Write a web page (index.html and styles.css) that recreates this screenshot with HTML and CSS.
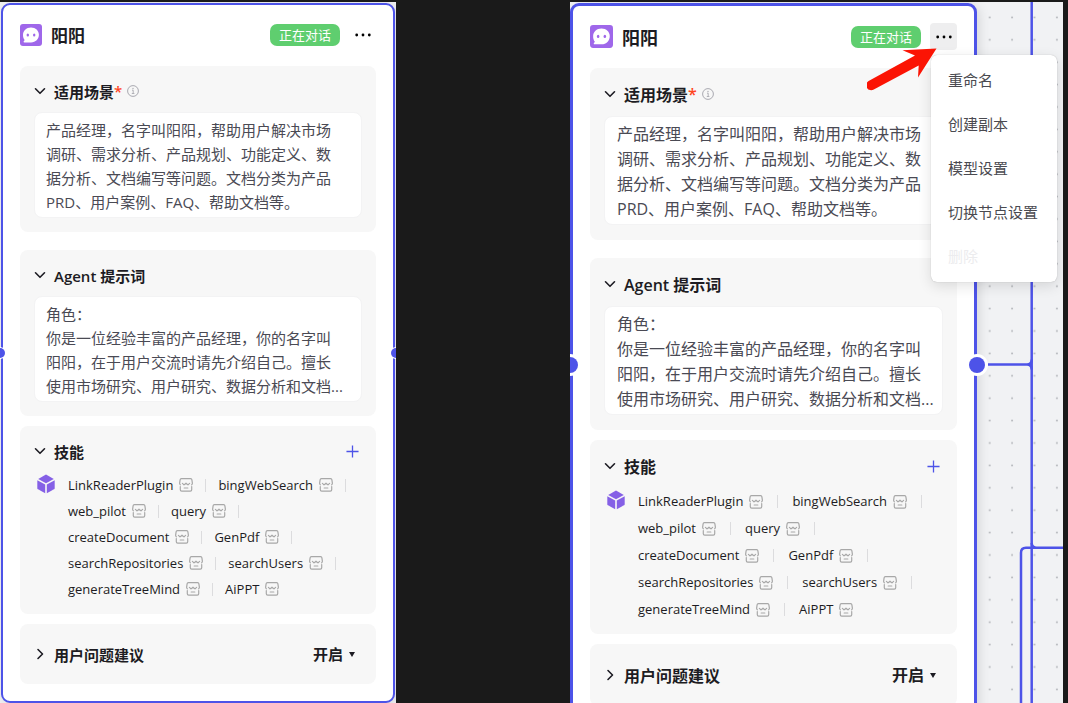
FILE: index.html
```html
<!DOCTYPE html>
<html lang="zh-CN">
<head>
  <meta charset="UTF-8">
  <meta name="viewport" content="width=device-width, initial-scale=1.0">
  <title>阳阳 - Agent</title>
  <link rel="stylesheet" href="styles.css">
</head>
<body>
  <!-- Shared icons -->
  <svg class="sprite" aria-hidden="true">
    <symbol id="i-bot" viewBox="0 0 22 22">
      <rect width="22" height="22" rx="3" fill="#9f67ea"/>
      <path d="M11 3.400c4.600 0 7.900 3.200 7.900 7.300s-3.200 7.700-7.900 7.700H4.300c-.8 0-1-.7-.5-1.200l.9-1.100C3.500 14.700 3 12.900 3 11c0-4.400 3.300-7.600 8-7.600z" fill="#fff"/>
      <ellipse cx="7.800" cy="10.900" rx="1.200" ry="1.500" fill="#9f67ea"/>
      <ellipse cx="14.200" cy="10.900" rx="1.200" ry="1.500" fill="#9f67ea"/>
    </symbol>
    <symbol id="i-dots" viewBox="0 0 16 16">
      <circle cx="1.700" cy="8" r="1.400"/><circle cx="8" cy="8" r="1.400"/><circle cx="14.300" cy="8" r="1.400"/>
    </symbol>
    <symbol id="i-down" viewBox="0 0 12 12">
      <path d="M1.500 3.800L6 8.300l4.500-4.500" fill="none" stroke="currentColor" stroke-width="1.600" stroke-linecap="round" stroke-linejoin="round"/>
    </symbol>
    <symbol id="i-right" viewBox="0 0 12 12">
      <path d="M4 1.500L8.500 6 4 10.500" fill="none" stroke="currentColor" stroke-width="1.600" stroke-linecap="round" stroke-linejoin="round"/>
    </symbol>
    <symbol id="i-info" viewBox="0 0 12 12">
      <circle cx="6" cy="6" r="5.400" fill="none" stroke="#a9a9b0" stroke-width="1"/>
      <path d="M5 5.200h1.200v3.200M4.800 8.500h2.600" fill="none" stroke="#a9a9b0" stroke-width=".9"/>
      <circle cx="6" cy="3.500" r=".7" fill="#a9a9b0"/>
    </symbol>
    <symbol id="i-plus" viewBox="0 0 14 14">
      <path d="M7 .5v13M.5 7h13" stroke="currentColor" stroke-width="1.400" fill="none"/>
    </symbol>
    <symbol id="i-cube" viewBox="0 0 18 20">
      <path d="M9 .6l7.800 4.300L9 9.200 1.200 4.900z"/>
      <path d="M.3 6.200l7.900 4.400v8.700L1 15.300c-.5-.3-.7-.6-.7-1.100z"/>
      <path d="M17.700 6.200l-7.900 4.400v8.700l7.200-4c.5-.3.7-.6.7-1.100z"/>
    </symbol>
    <symbol id="i-shop" viewBox="0 0 14 14">
      <g fill="none" stroke="#a8a8a8" stroke-width="1.200" stroke-linejoin="round" stroke-linecap="round">
        <path d="M1.300 6.800c-.5-.4-.7-.9-.7-1.500l.5-3.400C1.200 1.100 1.700.7 2.400.7h9.200c.7 0 1.200.4 1.300 1.200l.5 3.400c0 .6-.2 1.100-.7 1.500"/>
        <path d="M3.400 5.400L5 6.900l2-1.700 2 1.700 1.600-1.500"/>
        <path d="M1.300 8.500v3.300c0 .9.500 1.400 1.400 1.400h8.600c.9 0 1.400-.5 1.400-1.400V8.500"/>
        <path d="M5.200 10h3.600"/>
      </g>
    </symbol>
  </svg>

  <main class="compare">
    <section class="shot shot-before">
      <article class="card">
        <header class="card-header">
          <svg class="avatar"><use href="#i-bot"/></svg>
          <h2>阳阳</h2>
          <span class="status">正在对话</span>
          <div class="more">
            <button class="more-btn" type="button" aria-label="更多"><svg><use href="#i-dots"/></svg></button>
          </div>
        </header>

        <div class="panel panel-scene">
          <div class="panel-title">
            <button class="toggle" type="button"><svg><use href="#i-down"/></svg>适用场景<span class="required">*</span></button>
            <svg class="info"><use href="#i-info"/></svg>
          </div>
          <p class="text-box">产品经理，名字叫阳阳，帮助用户解决市场<br>调研、需求分析、产品规划、功能定义、数<br>据分析、文档编写等问题。文档分类为产品<br>PRD、用户案例、FAQ、帮助文档等。</p>
        </div>

        <div class="panel">
          <div class="panel-title">
            <button class="toggle" type="button"><svg><use href="#i-down"/></svg>Agent 提示词</button>
          </div>
          <p class="text-box">角色：<br>你是一位经验丰富的产品经理，你的名字叫<br>阳阳，在于用户交流时请先介绍自己。擅长<br>使用市场研究、用户研究、数据分析和文档...</p>
        </div>

        <div class="panel panel-skills">
          <div class="panel-title">
            <button class="toggle" type="button"><svg><use href="#i-down"/></svg>技能</button>
            <button class="add" type="button" aria-label="添加技能"><svg><use href="#i-plus"/></svg></button>
          </div>
          <div class="skills">
            <svg class="cube"><use href="#i-cube"/></svg>
            <ul>
              <li>LinkReaderPlugin<svg><use href="#i-shop"/></svg></li>
              <li>bingWebSearch<svg><use href="#i-shop"/></svg></li>
              <li>web_pilot<svg><use href="#i-shop"/></svg></li>
              <li>query<svg><use href="#i-shop"/></svg></li>
              <li>createDocument<svg><use href="#i-shop"/></svg></li>
              <li>GenPdf<svg><use href="#i-shop"/></svg></li>
              <li>searchRepositories<svg><use href="#i-shop"/></svg></li>
              <li>searchUsers<svg><use href="#i-shop"/></svg></li>
              <li>generateTreeMind<svg><use href="#i-shop"/></svg></li>
              <li>AiPPT<svg><use href="#i-shop"/></svg></li>
            </ul>
          </div>
        </div>

        <div class="panel panel-suggest">
          <div class="panel-title">
            <button class="toggle" type="button"><svg><use href="#i-right"/></svg>用户问题建议</button>
            <div class="switch">
              <select aria-label="用户问题建议">
                <option>开启</option>
                <option>关闭</option>
              </select>
            </div>
          </div>
        </div>
        <span class="port port-in"></span>
        <span class="port port-out"></span>
      </article>
    </section>

    <section class="shot shot-after">
      <svg class="canvas" aria-hidden="true">
        <defs>
          <pattern id="grid" x="-3" y="4.200" width="22.400" height="22.400" patternUnits="userSpaceOnUse">
            <circle cx="19.500" cy="11.200" r="1" fill="#b3b5ba"/>
          </pattern>
        </defs>
        <rect width="100%" height="100%" fill="url(#grid)"/>
        <g fill="none" stroke="#4d53e8" stroke-width="2.500">
          <path d="M461.700 0V720"/>
          <path d="M418 362.500H457q4.700 0 4.700-5M457 362.500q4.700 0 4.700 5"/>
          <path d="M493 545.700H456q-5 0-5 5V720M461.700 541q0 4.700 5 4.700"/>
        </g>
      </svg>

      <article class="card">
        <header class="card-header">
          <svg class="avatar"><use href="#i-bot"/></svg>
          <h2>阳阳</h2>
          <span class="status">正在对话</span>
          <div class="more">
            <button class="more-btn active" type="button" aria-label="更多" aria-expanded="true"><svg><use href="#i-dots"/></svg></button>
            <svg class="arrow" viewBox="0 0 70 44" aria-hidden="true">
              <path d="M69.500.5L51 29.500l.7-12L6.800 41.500A4.800 4.800 0 0 1 1.600 33L48 7.500 35.500 2.200z" fill="#fb1404"/>
            </svg>
            <div class="menu">
              <button type="button">重命名</button>
              <button type="button">创建副本</button>
              <button type="button">模型设置</button>
              <button type="button">切换节点设置</button>
              <button type="button" disabled>删除</button>
            </div>
          </div>
        </header>

        <div class="panel panel-scene">
          <div class="panel-title">
            <button class="toggle" type="button"><svg><use href="#i-down"/></svg>适用场景<span class="required">*</span></button>
            <svg class="info"><use href="#i-info"/></svg>
          </div>
          <p class="text-box">产品经理，名字叫阳阳，帮助用户解决市场<br>调研、需求分析、产品规划、功能定义、数<br>据分析、文档编写等问题。文档分类为产品<br>PRD、用户案例、FAQ、帮助文档等。</p>
        </div>

        <div class="panel">
          <div class="panel-title">
            <button class="toggle" type="button"><svg><use href="#i-down"/></svg>Agent 提示词</button>
          </div>
          <p class="text-box">角色：<br>你是一位经验丰富的产品经理，你的名字叫<br>阳阳，在于用户交流时请先介绍自己。擅长<br>使用市场研究、用户研究、数据分析和文档...</p>
        </div>

        <div class="panel panel-skills">
          <div class="panel-title">
            <button class="toggle" type="button"><svg><use href="#i-down"/></svg>技能</button>
            <button class="add" type="button" aria-label="添加技能"><svg><use href="#i-plus"/></svg></button>
          </div>
          <div class="skills">
            <svg class="cube"><use href="#i-cube"/></svg>
            <ul>
              <li>LinkReaderPlugin<svg><use href="#i-shop"/></svg></li>
              <li>bingWebSearch<svg><use href="#i-shop"/></svg></li>
              <li>web_pilot<svg><use href="#i-shop"/></svg></li>
              <li>query<svg><use href="#i-shop"/></svg></li>
              <li>createDocument<svg><use href="#i-shop"/></svg></li>
              <li>GenPdf<svg><use href="#i-shop"/></svg></li>
              <li>searchRepositories<svg><use href="#i-shop"/></svg></li>
              <li>searchUsers<svg><use href="#i-shop"/></svg></li>
              <li>generateTreeMind<svg><use href="#i-shop"/></svg></li>
              <li>AiPPT<svg><use href="#i-shop"/></svg></li>
            </ul>
          </div>
        </div>

        <div class="panel panel-suggest">
          <div class="panel-title">
            <button class="toggle" type="button"><svg><use href="#i-right"/></svg>用户问题建议</button>
            <div class="switch">
              <select aria-label="用户问题建议">
                <option>开启</option>
                <option>关闭</option>
              </select>
            </div>
          </div>
        </div>
        <span class="port port-in"></span>
        <span class="port port-out"></span>
      </article>
    </section>
  </main>
</body>
</html>
```

FILE: styles.css
```css
/* General Styles */
* {
  box-sizing: border-box;
}

body {
  margin: 0;
  height: 100vh;
  overflow: hidden;
  background-color: #1a1a1a;
  color: #1d1c23;
  font-family: "Open Sans", "Noto Sans CJK SC", sans-serif;
}

button, select {
  padding: 0;
  border: none;
  background: none;
  color: inherit;
  font: inherit;
  cursor: pointer;
}

svg {
  display: block;
  flex: none;
}

.sprite {
  position: absolute;
  width: 0;
  height: 0;
}

/* Two states side by side */
.compare {
  display: grid;
  grid-template-columns: 396fr 493fr;
  column-gap: 174px;
  height: 100%;
  padding: 2px 5px 0 0;
}

.shot {
  position: relative;
  overflow: hidden;
  background-color: #f1f2f4;
}

.shot-before {
  --edge: 2px;
  --avatar: 22px;
  --name: 17px;
  --text: 15px;
  --line: 24px;
  --title-line: 22px;
  --box-pad: 5px 11px 3px;
  --panel-bottom: 14px;
  --header-line: 25px;
  --header-gap: 19px;
  --skill-line: 26px;
  --skill-gap: 12px;
  --skills-bottom: 12px;
  --suggest-pad: 19px;
  --port: 10px;
  --ring: 1px;
  padding: 1px 1px 0;
}

.shot-after {
  --edge: 3px;
  --avatar: 23px;
  --name: 18px;
  --text: 16px;
  --line: 25px;
  --title-line: 24px;
  --box-pad: 5px 12px 2px;
  --panel-bottom: 15px;
  --header-line: 27px;
  --header-gap: 18px;
  --skill-line: 27px;
  --skill-gap: 14px;
  --skills-bottom: 11px;
  --suggest-pad: 19px;
  --port: 16px;
  --ring: 3px;
  padding: 1px 86px 0 0;
}

.canvas {
  position: absolute;
  top: 0;
  left: 0;
  width: 100%;
  height: 100%;
}

/* Card */
.card {
  position: relative;
  padding: 17px;
  border: var(--edge) solid #4d53e8;
  border-radius: 9px;
  background-color: #fff;
  box-shadow: 2px 2px 12px rgba(0, 0, 0, 0.12);
}

.card-header {
  display: flex;
  align-items: center;
  height: var(--header-line);
  margin-bottom: var(--header-gap);
}

.avatar {
  width: var(--avatar);
  height: var(--avatar);
  margin-right: 9px;
}

.card-header h2 {
  flex: 1;
  margin: 0;
  padding-top: 3px;
  font-size: var(--name);
  line-height: 24px;
  font-weight: 700;
}

.status {
  padding: 0 9px;
  border-radius: 7px;
  background-color: #5fce6f;
  color: #fff;
  font-size: 13px;
  line-height: 22px;
}

.more {
  position: relative;
  margin-left: 9px;
}

.more-btn {
  display: flex;
  justify-content: center;
  align-items: center;
  width: 27px;
  height: 27px;
  border-radius: 4px;
}

.more-btn.active {
  background-color: #eeeeef;
}

.more-btn svg {
  width: 16px;
  height: 16px;
}

/* Drop-down menu */
.menu {
  position: absolute;
  z-index: 2;
  top: 32px;
  left: 1px;
  width: 126px;
  padding: 2px 0 5px;
  border-radius: 6px;
  background-color: #fff;
  box-shadow: 0 0 1px rgba(0, 0, 0, 0.3), 0 4px 14px rgba(0, 0, 0, 0.12);
}

.menu button {
  display: block;
  width: 100%;
  height: 44px;
  padding: 0 0 0 17px;
  color: #4a4a50;
  font-size: 15px;
  text-align: left;
}

.menu button:disabled {
  color: #ececee;
}

.arrow {
  position: absolute;
  z-index: 3;
  top: 25px;
  left: -63px;
  width: 70px;
  height: 44px;
}

/* Panels */
.panel {
  margin-bottom: 10px;
  padding: 14px 14px var(--panel-bottom);
  border-radius: 8px;
  background-color: #f7f7f7;
}

.panel-scene {
  margin-bottom: 18px;
}

.panel-title {
  display: flex;
  align-items: center;
  height: var(--title-line);
  margin-bottom: 10px;
}

.toggle {
  display: flex;
  align-items: center;
  font-size: var(--text);
  font-weight: 600;
}

.toggle svg {
  width: 12px;
  height: 12px;
  margin-right: 8px;
}

.required {
  color: #ff441e;
}

.info {
  width: 12px;
  height: 12px;
  margin-left: 5px;
}

.text-box {
  margin: 0;
  padding: var(--box-pad);
  border: 1px solid #f3f3f4;
  border-radius: 8px;
  background-color: #fff;
  color: #4a4a54;
  font-size: var(--text);
  line-height: var(--line);
  white-space: nowrap;
}

/* Skills */
.add {
  margin-left: auto;
  margin-right: 3px;
  color: #4d53e8;
}

.add svg {
  width: 13px;
  height: 13px;
}

.panel-skills {
  padding-right: 8px;
  padding-bottom: var(--skills-bottom);
}

.panel-skills .panel-title {
  padding-right: 6px;
}

.skills {
  display: flex;
}

.cube {
  width: 18px;
  height: 20px;
  margin: 2px 13px 0 3px;
  fill: #8560e6;
}

.skills ul {
  display: flex;
  flex-wrap: wrap;
  flex: 1;
  margin: 0;
  padding: 0;
  list-style: none;
}

.skills li {
  display: flex;
  align-items: center;
  font-size: 13px;
  font-weight: 500;
  line-height: var(--skill-line);
}

.skills li svg {
  width: 14px;
  height: 14px;
  margin-left: 6px;
}

.skills li:not(:last-child)::after {
  content: "";
  width: 1px;
  height: 13px;
  margin: 0 var(--skill-gap);
  background-color: #dcdcde;
}

/* Question suggestions */
.panel-suggest {
  margin-bottom: 0;
  padding-top: var(--suggest-pad);
  padding-bottom: var(--suggest-pad);
}

.panel-suggest .panel-title {
  margin-bottom: 0;
}

.switch {
  display: flex;
  align-items: center;
  margin-left: auto;
  margin-right: 7px;
}

.switch select {
  appearance: none;
  font-size: var(--text);
  font-weight: 600;
}

.switch::after {
  content: "";
  margin-left: 5px;
  border: 3px solid transparent;
  border-top: 5px solid #1d1c23;
  border-bottom: none;
}

/* Connection points */
.port {
  position: absolute;
  top: 50%;
  width: var(--port);
  height: var(--port);
  border-radius: 50%;
  background-color: #4d53e8;
  box-shadow: 0 0 0 var(--ring) #fff;
  transform: translate(-50%, -50%);
}

.port-in {
  left: -3px;
}

.port-out {
  left: calc(100% + 3px);
}
```
